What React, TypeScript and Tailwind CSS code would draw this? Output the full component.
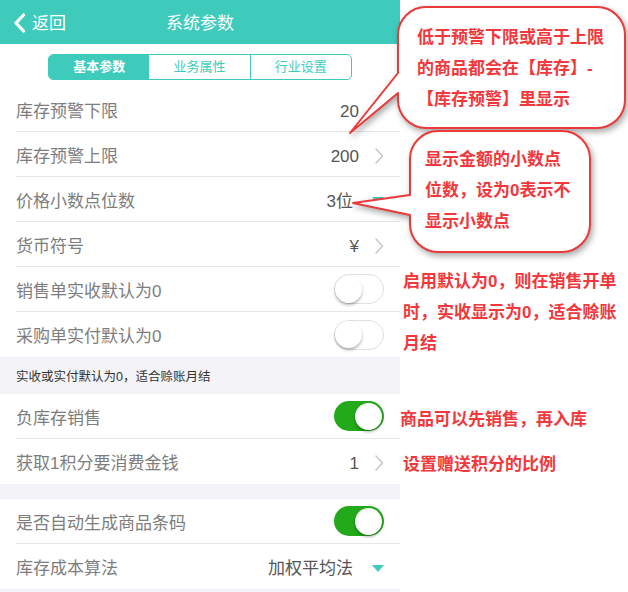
const FONT = "font-['Liberation_Sans','Noto_Sans_CJK_SC',sans-serif]";

function Chevron() {
  return (
    <svg width="9" height="16" viewBox="0 0 9 16" fill="none">
      <path d="M1 1 L7.5 8 L1 15" stroke="#c8c8cc" strokeWidth="1.6" strokeLinecap="round" strokeLinejoin="round" />
    </svg>
  );
}

function Caret() {
  return (
    <svg width="12" height="7" viewBox="0 0 12 7">
      <path d="M0 0 H12 L6 7 Z" fill="#3ecbbc" />
    </svg>
  );
}

function Toggle({ on }: { on: boolean }) {
  return (
    <div
      className={
        on
          ? "flex h-[30px] w-[50px] items-center justify-end rounded-full bg-[#22aa1a] px-[2px]"
          : "flex h-[30px] w-[50px] items-center justify-start rounded-full border border-[#e0e0e0] bg-white"
      }
    >
      <div className="h-[27px] w-[27px] rounded-full bg-white shadow-[0_2px_3px_rgba(0,0,0,0.3)]" />
    </div>
  );
}

type Row = {
  label: string;
  value?: string;
  right?: "chevron" | "hidden" | "caret" | "off" | "on" | "none";
  last?: boolean;
};

function SettingRow({ label, value, right = "none", last }: Row) {
  return (
    <div className="bg-white pl-[16px]">
      <div
        className={
          last
            ? "flex h-[45px] items-center justify-between pr-[16px]"
            : "flex h-[45px] items-center justify-between border-b border-[#e6e6e6] pr-[16px]"
        }
      >
        <span className="pt-[5px] text-[17px] text-[#7d7d7d]">{label}</span>
        <div className="flex items-center">
          {value && <span className="pt-[5px] text-[17px] text-[#555]">{value}</span>}
          {right === "chevron" && (
            <span className="ml-[16px] flex pt-[3px]">
              <Chevron />
            </span>
          )}
          {/* arrow sits under the callout pointer */}
          {right === "hidden" && (
            <span className="invisible ml-[16px] flex pt-[3px]">
              <Chevron />
            </span>
          )}
          {right === "caret" && (
            <span className="ml-[19px] flex pt-[3px]">
              <Caret />
            </span>
          )}
          {right === "off" && <Toggle on={false} />}
          {right === "on" && <Toggle on />}
        </div>
      </div>
    </div>
  );
}

const group1: Row[] = [
  { label: "库存预警下限", value: "20", right: "hidden" },
  { label: "库存预警上限", value: "200", right: "chevron" },
  { label: "价格小数点位数", value: "3位", right: "caret" },
  { label: "货币符号", value: "¥", right: "chevron" },
  { label: "销售单实收默认为0", right: "off" },
  { label: "采购单实付默认为0", right: "off", last: true },
];

const group2: Row[] = [
  { label: "负库存销售", right: "on" },
  { label: "获取1积分要消费金钱", value: "1", right: "chevron", last: true },
];

const group3: Row[] = [
  { label: "是否自动生成商品条码", right: "on" },
  { label: "库存成本算法", value: "加权平均法", right: "caret", last: true },
];

function Callouts() {
  return (
    <svg
      className="pointer-events-none absolute left-0 top-0"
      width="628"
      height="592"
      viewBox="0 0 628 592"
      fill="none"
      style={{ filter: "drop-shadow(2px 3px 3px rgba(0,0,0,0.35))" }}
    >
      <path
        d="M426 7 H597 A28 28 0 0 1 625 35 V100 A28 28 0 0 1 597 128 H426 A28 28 0 0 1 398 100 V93 L350 133 L398 73 V35 A28 28 0 0 1 426 7 Z"
        fill="#fff"
        stroke="#ea3a3a"
        strokeWidth="2"
        strokeLinejoin="round"
      />
      <path
        d="M438 131 H562 A28 28 0 0 1 590 159 V224 A28 28 0 0 1 562 252 H438 A28 28 0 0 1 410 224 V215 L353 203 L410 195 V159 A28 28 0 0 1 438 131 Z"
        fill="#fff"
        stroke="#ea3a3a"
        strokeWidth="2"
        strokeLinejoin="round"
      />
    </svg>
  );
}

const note = "text-[17px] font-bold leading-[31px] text-[#f2383c] whitespace-nowrap";

export default function App() {
  return (
    <div className={`relative flex h-[592px] w-[628px] overflow-hidden bg-white ${FONT}`}>
      {/* Phone screen */}
      <div className="flex w-[400px] flex-col bg-[#f4f4f8]">
        <div className="grid h-[44px] grid-cols-[1fr_auto_1fr] items-center bg-[#3ecbbc] pt-[3px] text-white">
          <div className="flex items-center pl-[13px]">
            <svg width="13" height="20" viewBox="0 0 13 20" fill="none" className="-mt-[2px]">
              <path d="M10.5 2 L3 10 L10.5 18" stroke="#fff" strokeWidth="3.2" strokeLinecap="round" strokeLinejoin="round" />
            </svg>
            <span className="ml-[6px] text-[17px]">返回</span>
          </div>
          <div className="text-[17px]">系统参数</div>
          <div />
        </div>

        <div className="flex h-[43px] items-center justify-center bg-white pt-[2px]">
          <div className="flex h-[26px] w-[304px] overflow-hidden rounded-[5px] border border-[#3ecbbc] text-[13px]">
            <div className="flex flex-1 items-center justify-center bg-[#3ecbbc] font-bold text-white">基本参数</div>
            <div className="flex flex-1 items-center justify-center border-r border-[#3ecbbc] text-[#3ecbbc]">业务属性</div>
            <div className="flex flex-1 items-center justify-center text-[#3ecbbc]">行业设置</div>
          </div>
        </div>

        {group1.map((r) => (
          <SettingRow key={r.label} {...r} />
        ))}

        <div className="flex h-[37px] items-center pl-[16px] pt-[4px] text-[12.5px] text-[#333]">
          实收或实付默认为0，适合赊账月结
        </div>

        {group2.map((r) => (
          <SettingRow key={r.label} {...r} />
        ))}

        <div className="h-[15px]" />

        {group3.map((r) => (
          <SettingRow key={r.label} {...r} />
        ))}
      </div>

      <Callouts />

      {/* Callout texts */}
      <div className={`absolute left-[417px] top-[22px] ${note}`}>
        <div>低于预警下限或高于上限</div>
        <div>的商品都会在【库存】-</div>
        <div>【库存预警】里显示</div>
      </div>
      <div className={`absolute left-[425px] top-[144px] ${note}`}>
        <div>显示金额的小数点</div>
        <div>位数，设为0表示不</div>
        <div>显示小数点</div>
      </div>
      <div className={`absolute left-[403px] top-[266px] ${note}`}>
        <div>启用默认为0，则在销售开单</div>
        <div>时，实收显示为0，适合赊账</div>
        <div>月结</div>
      </div>
      <div className={`absolute left-[400px] top-[404px] ${note}`}>商品可以先销售，再入库</div>
      <div className={`absolute left-[403px] top-[449px] ${note}`}>设置赠送积分的比例</div>
    </div>
  );
}
